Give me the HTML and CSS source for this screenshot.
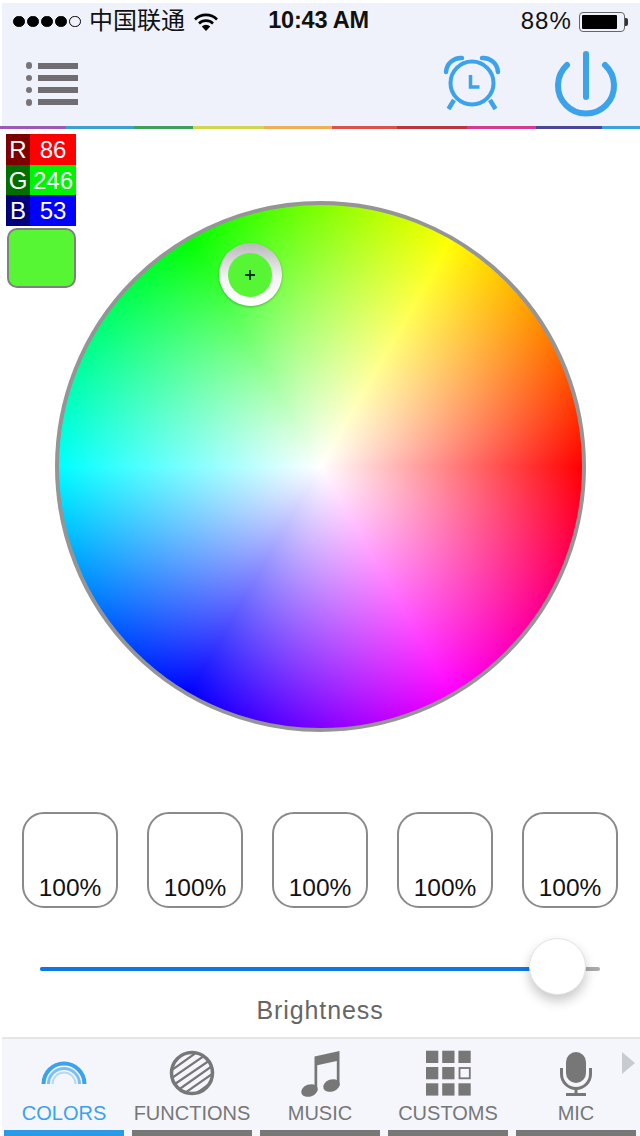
FILE: index.html
```html
<!DOCTYPE html>
<html lang="en">
<head>
    <meta charset="UTF-8">
    <meta name="viewport" content="width=device-width, initial-scale=1.0">
    <title>Colors</title>
    <link rel="stylesheet" href="styles.css">
</head>
<body>
    <header class="top">
        <div class="status">
            <div class="status-left">
                <span class="signal"><i></i><i></i><i></i><i></i><i class="off"></i></span>
                <span class="carrier">中国联通</span>
                <svg class="wifi" width="24" height="20" viewBox="0 0 24 20">
                    <path d="M1 7.5a15.5 15.5 0 0 1 22 0" fill="none" stroke="#000" stroke-width="2.6"/>
                    <path d="M5 11.5a10 10 0 0 1 14 0" fill="none" stroke="#000" stroke-width="2.6"/>
                    <path d="M12 19l-4.2-4.6a6 6 0 0 1 8.4 0z"/>
                </svg>
            </div>
            <div class="clock">10:43 AM</div>
            <div class="status-right">
                <span class="percent">88%</span>
                <span class="battery"><span class="battery-level"></span></span>
                <span class="battery-tip"></span>
            </div>
        </div>
        <nav class="nav">
            <div class="menu-icon">
                <div class="menu-row"><i></i><b></b></div>
                <div class="menu-row"><i></i><b></b></div>
                <div class="menu-row"><i></i><b></b></div>
                <div class="menu-row"><i></i><b></b></div>
            </div>
            <svg class="alarm" width="60" height="60" viewBox="0 0 60 60" fill="none" stroke="#3ba2ec" stroke-width="4">
                <circle cx="30" cy="30" r="21.5"/>
                <path d="M28.5 22v12h9" stroke-width="3.5"/>
                <path d="M4 19a15 15 0 0 1 16-14" stroke-width="4.5" stroke-linecap="round"/>
                <path d="M56 19a15 15 0 0 0-16-14" stroke-width="4.5" stroke-linecap="round"/>
                <path d="M12 47l-5.500 9M48 47l5.500 9" stroke-width="4.500"/>
            </svg>
            <svg class="power" width="66" height="72" viewBox="0 0 66 72" fill="none" stroke="#3ba2ec" stroke-width="6" stroke-linecap="round">
                <path d="M14 16a28 28 0 1 0 38 0"/>
                <path d="M33 5v43"/>
            </svg>
        </nav>
        <div class="rainbow">
            <i class="c1"></i><i class="c2"></i><i class="c3"></i><i class="c4"></i><i class="c5"></i>
            <i class="c6"></i><i class="c7"></i><i class="c8"></i><i class="c9"></i><i class="c10"></i>
        </div>
    </header>

    <main class="main">
        <section class="stage">
            <div class="readout">
                <div class="channel"><span class="key key-r">R</span><span class="val val-r">86</span></div>
                <div class="channel"><span class="key key-g">G</span><span class="val val-g">246</span></div>
                <div class="channel"><span class="key key-b">B</span><span class="val val-b">53</span></div>
                <div class="current"></div>
            </div>
            <div class="wheel">
                <div class="picker">
                    <div class="picker-hole"><span class="cross"></span></div>
                </div>
            </div>
        </section>

        <section class="presets">
            <div class="preset">100%</div>
            <div class="preset">100%</div>
            <div class="preset">100%</div>
            <div class="preset">100%</div>
            <div class="preset">100%</div>
        </section>

        <div class="slider">
            <div class="slider-fill" style="width: 92%"></div>
            <div class="slider-thumb" style="left: 92.3%"></div>
        </div>
        <div class="slider-label">Brightness</div>
    </main>

    <footer class="tabs">
        <div class="tab active">
            <svg width="60" height="60" viewBox="0 0 60 60" fill="none">
                <path d="M9.500 40a20.500 20.500 0 0 1 41 0" stroke="#3ba2ec" stroke-width="4"/>
                <path d="M14.500 40a15.500 15.500 0 0 1 31 0" stroke="#7dbff2" stroke-width="3"/>
                <path d="M18.500 40a11.500 11.500 0 0 1 23 0" stroke="#b4d9f6" stroke-width="2"/>
            </svg>
            <span class="tab-name">COLORS</span>
        </div>
        <div class="tab">
            <svg width="60" height="60" viewBox="0 0 60 60" fill="none" stroke="#777">
                <defs><clipPath id="disc"><circle cx="30" cy="29" r="20.5"/></clipPath></defs>
                <g clip-path="url(#disc)" stroke-width="2.2">
                    <path d="M0 25L35 0M0 33L45 1M4 38L55 3M10 42L60 8M12 49L60 15M20 51L60 23M28 54L60 31"/>
                </g>
                <circle cx="30" cy="29" r="20.5" stroke-width="3.5"/>
            </svg>
            <span class="tab-name">FUNCTIONS</span>
        </div>
        <div class="tab">
            <svg width="60" height="60" viewBox="0 0 60 60" fill="#777">
                <path d="M24.500 12.500L49.500 7V42H46.800V17L27.200 21.200V47H24.500z"/>
                <ellipse cx="19.500" cy="46.500" rx="8.500" ry="6" transform="rotate(-20 19.500 46.500)"/>
                <ellipse cx="41.500" cy="41.500" rx="8.500" ry="6" transform="rotate(-20 41.500 41.500)"/>
            </svg>
            <span class="tab-name">MUSIC</span>
        </div>
        <div class="tab">
            <svg width="60" height="60" viewBox="0 0 60 60" fill="#777">
                <rect x="8" y="6.700" width="12.300" height="12.300"/><rect x="24.200" y="6.700" width="12.300" height="12.300"/><rect x="40.400" y="6.700" width="12.300" height="12.300"/>
                <rect x="8" y="23" width="12.300" height="12.300"/><rect x="24.200" y="23" width="12.300" height="12.300"/>
                <rect x="41.500" y="24" width="10.300" height="10.300" fill="none" stroke="#777" stroke-width="1.800"/>
                <rect x="8" y="39.300" width="12.300" height="12.300"/><rect x="24.200" y="39.300" width="12.300" height="12.300"/><rect x="40.400" y="39.300" width="12.300" height="12.300"/>
            </svg>
            <span class="tab-name">CUSTOMS</span>
        </div>
        <div class="tab">
            <svg width="60" height="60" viewBox="0 0 60 60" fill="none" stroke="#777" stroke-width="3">
                <rect x="20" y="8" width="20" height="31" rx="10" fill="#777" stroke="none"/>
                <path d="M15.500 24v6a14.500 14.500 0 0 0 29 0v-6"/>
                <path d="M30 44v6M20 50.500h20"/>
            </svg>
            <span class="tab-name">MIC</span>
        </div>
        <span class="tabs-more"></span>
    </footer>
</body>
</html>
```
FILE: styles.css
```css
* {
    box-sizing: border-box;
}
body {
    width: 640px;
    height: 1136px;
    margin: 0;
    overflow: hidden;
    display: flex;
    flex-direction: column;
    background-color: #fff;
    font-family: "Liberation Sans", "Noto Sans CJK SC", sans-serif;
}
i {
    display: block;
}

/* header */
.top {
    height: 129px;
    flex: none;
    padding-top: 3px;
    display: flex;
    flex-direction: column;
}
.status {
    height: 37px;
    margin-left: 2px;
    padding: 0 12px 0 11px;
    display: grid;
    grid-template-columns: 1fr auto 1fr;
    align-items: center;
    background-color: #eff2fa;
}
.status-left {
    display: flex;
    align-items: center;
}
.signal {
    display: flex;
    gap: 2.5px;
}
.signal i {
    width: 11.5px;
    height: 11.5px;
    border-radius: 50%;
    background-color: #000;
    border: 1px solid #000;
}
.signal .off {
    background-color: transparent;
}
.carrier {
    margin-left: 8.5px;
    padding-bottom: 2px;
    font-size: 24px;
    line-height: 30px;
    color: #111;
}
.wifi {
    margin-left: 9px;
}
.clock {
    padding: 0 4px 2px 0;
    font-size: 23.5px;
    font-weight: bold;
    letter-spacing: -0.2px;
    color: #111;
}
.status-right {
    display: flex;
    align-items: center;
    justify-content: flex-end;
}
.percent {
    padding-bottom: 2px;
    font-size: 24px;
    letter-spacing: 1.1px;
    color: #111;
    margin-right: 7px;
}
.battery {
    width: 46px;
    height: 20px;
    padding: 2px;
    border: 1.5px solid #666;
    border-radius: 4px;
}
.battery-level {
    display: block;
    width: 88%;
    height: 100%;
    background-color: #000;
    border-radius: 1px;
}
.battery-tip {
    width: 3px;
    height: 8px;
    background-color: #333;
    border-radius: 0 2px 2px 0;
}
.nav {
    flex: 1;
    margin-left: 2px;
    padding: 0 21.5px 0 23.5px;
    display: flex;
    align-items: center;
    background-color: #eff2fa;
}
.menu-icon {
    display: flex;
    flex-direction: column;
    gap: 5.7px;
    margin-top: 2px;
}
.menu-row {
    display: flex;
    align-items: center;
    gap: 6px;
}
.menu-row i {
    width: 6.5px;
    height: 6.5px;
    border-radius: 50%;
    background-color: #77757a;
}
.menu-row b {
    width: 40px;
    height: 6px;
    background-color: #6f6d72;
}
.alarm {
    margin-left: auto;
}
.power {
    margin-left: 51px;
    margin-top: 4px;
}
.rainbow {
    height: 3px;
    flex: none;
    display: flex;
}
.c1 { width: 66px; background-color: #9b59b6; }
.c2 { width: 68px; background-color: #3b9fd0; }
.c3 { width: 59px; background-color: #3f9f5c; }
.c4 { width: 71px; background-color: #cfd64f; }
.c5 { width: 68px; background-color: #eeae55; }
.c6 { width: 65px; background-color: #d9534a; }
.c7 { width: 70px; background-color: #b9363f; }
.c8 { width: 69px; background-color: #d63a8e; }
.c9 { width: 66px; background-color: #4a4796; }
.c10 { width: 38px; background-color: #3ba2dc; }

/* wheel and readout */
.main {
    flex: 1;
    display: flex;
    flex-direction: column;
}
.stage {
    display: grid;
}
.readout,
.wheel {
    grid-area: 1 / 1;
}
.readout {
    width: 70px;
    margin: 5px 0 0 6px;
    align-self: start;
    z-index: 1;
}
.channel {
    height: 30.6px;
    display: flex;
    color: #fff;
    font-size: 24px;
    line-height: 31px;
    text-align: center;
}
.key {
    width: 24px;
}
.val {
    flex: 1;
}
.key-r { background-color: #7d0000; }
.key-g { background-color: #006f00; }
.key-b { background-color: #00007d; }
.val-r { background-color: #ff0000; }
.val-g { background-color: #00f400; }
.val-b { background-color: #0000ff; }
.current {
    height: 60px;
    margin: 2px 0 0 1px;
    width: 69px;
    border: 2px solid #808080;
    border-radius: 10px;
    background-color: #56f635;
}
.wheel {
    position: relative;
    width: 531px;
    height: 531px;
    margin: 72px 0 0 55px;
    border: 4px solid #959595;
    border-radius: 50%;
    background:
        radial-gradient(closest-side, #fff, rgba(255, 255, 255, 0)),
        conic-gradient(from 90deg, #f00, #f0f, #00f, #0ff, #0f0, #ff0, #f00);
}
.picker {
    position: absolute;
    left: 159.5px;
    top: 38px;
    width: 63px;
    height: 63px;
    display: flex;
    align-items: center;
    justify-content: center;
    border-radius: 50%;
    background: linear-gradient(#b9b9b9, #f4f4f4 55%, #fff);
    box-shadow: 0 1px 3px rgba(0, 0, 0, 0.3);
}
.picker-hole {
    width: 44px;
    height: 44px;
    display: flex;
    align-items: center;
    justify-content: center;
    border-radius: 50%;
    background-color: #56f635;
}
.cross {
    position: relative;
    width: 10px;
    height: 2px;
    background-color: #032;
}
.cross::after {
    content: "";
    position: absolute;
    left: 4px;
    top: -4px;
    width: 2px;
    height: 10px;
    background-color: #032;
}

/* presets */
.presets {
    margin-top: 80px;
    padding: 0 22px;
    display: flex;
    justify-content: space-between;
}
.preset {
    width: 96px;
    height: 96px;
    padding-bottom: 4px;
    display: flex;
    align-items: flex-end;
    justify-content: center;
    border: 2px solid #8a8a8a;
    border-radius: 22px;
    font-size: 24.5px;
    line-height: 28px;
    color: #111;
}

/* brightness */
.slider {
    position: relative;
    height: 4px;
    margin: 59px 40px 0;
    background-color: #aaa;
    border-radius: 2px;
}
.slider-fill {
    height: 100%;
    background-color: #0c78e8;
    border-radius: 2px;
}
.slider-thumb {
    position: absolute;
    top: -29px;
    width: 57px;
    height: 57px;
    margin-left: -28px;
    border-radius: 50%;
    background-color: #fff;
    border: 1px solid #e4e4e4;
    box-shadow: 0 6px 12px rgba(0, 0, 0, 0.22);
}
.slider-label {
    margin-top: 24px;
    text-align: center;
    font-size: 25px;
    line-height: 30px;
    letter-spacing: 0.9px;
    color: #666;
}

/* tabs */
.tabs {
    position: relative;
    height: 99px;
    flex: none;
    margin-left: 2px;
    padding-left: 2px;
    display: grid;
    grid-template-columns: repeat(5, 120px);
    column-gap: 8px;
    border-top: 2px solid #e6e6e6;
    background-color: #f4f6fb;
}
.tab {
    display: flex;
    flex-direction: column;
    align-items: center;
    border-bottom: 6px solid #777;
    padding-top: 5px;
    color: #777;
}
.tab svg {
    flex: none;
}
.tab-name {
    font-size: 20px;
    line-height: 20px;
    margin-top: -1px;
}
.tab.active {
    border-bottom-color: #2a9ae6;
    color: #3ba2ec;
}
.tabs-more {
    position: absolute;
    right: 5px;
    top: 13px;
    border-left: 13px solid #c8cbd0;
    border-top: 11.5px solid transparent;
    border-bottom: 11.5px solid transparent;
}
```
